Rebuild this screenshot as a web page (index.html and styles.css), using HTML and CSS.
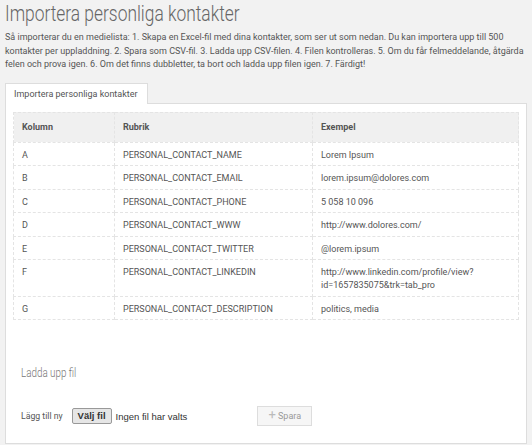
FILE: index.html
```html
<!DOCTYPE html>
<html lang="sv">
<head>
    <meta charset="UTF-8">
    <title>Importera personliga kontakter</title>
    <link rel="stylesheet" href="styles.css">
</head>
<body>

<h1 class="page-title"><span class="narrow">Importera personliga kontakter</span></h1>
<p class="intro">Så importerar du en medielista: 1. Skapa en Excel-fil med dina kontakter, som ser ut som nedan. Du kan importera upp till 500 kontakter per uppladdning. 2. Spara som CSV-fil. 3. Ladda upp CSV-filen. 4. Filen kontrolleras. 5. Om du får felmeddelande, åtgärda felen och prova igen. 6. Om det finns dubbletter, ta bort och ladda upp filen igen. 7. Färdigt!</p>

<div class="tabs">
    <div class="tab active">Importera personliga kontakter</div>
</div>

<div class="panel">
    <table class="columns">
        <thead>
            <tr><th class="col-a">Kolumn</th><th class="col-b">Rubrik</th><th>Exempel</th></tr>
        </thead>
        <tbody>
            <tr><td>A</td><td>PERSONAL_CONTACT_NAME</td><td>Lorem Ipsum</td></tr>
            <tr><td>B</td><td>PERSONAL_CONTACT_EMAIL</td><td>lorem.ipsum@dolores.com</td></tr>
            <tr><td>C</td><td>PERSONAL_CONTACT_PHONE</td><td>5 058 10 096</td></tr>
            <tr><td>D</td><td>PERSONAL_CONTACT_WWW</td><td>http://www.dolores.com/</td></tr>
            <tr><td>E</td><td>PERSONAL_CONTACT_TWITTER</td><td>@lorem.ipsum</td></tr>
            <tr><td>F</td><td>PERSONAL_CONTACT_LINKEDIN</td><td>http://www.linkedin.com/profile/view?<br>id=1657835075&amp;trk=tab_pro</td></tr>
            <tr><td>G</td><td>PERSONAL_CONTACT_DESCRIPTION</td><td>politics, media</td></tr>
        </tbody>
    </table>

    <h3 class="upload-title"><span class="narrow">Ladda upp fil</span></h3>

    <div class="upload-row">
        <span class="upload-label">Lägg till ny</span>
        <span class="file-btn">Välj fil</span>
        <span class="file-name">Ingen fil har valts</span>
        <span class="save-btn"><span class="plus">+</span> Spara</span>
    </div>
</div>

</body>
</html>
```

FILE: styles.css
```css
body {
    margin: 0;
    padding: 0 5px 7px;
    background-color: #f2f2f2;
    font-family: 'Roboto', sans-serif;
    color: #555;
}

.narrow {
    display: inline-block;
    transform-origin: left center;
    white-space: nowrap;
}

.page-title {
    margin: 0;
    padding-top: 1px;
    font-size: 22px;
    font-weight: 300;
    color: #666;
    line-height: 26px;
}

.page-title .narrow {
    transform: scaleX(0.79);
}

.intro {
    margin: 4px 0 0;
    font-size: 9px;
    line-height: 13.5px;
    color: #555;
}

.tabs {
    display: flex;
    margin-top: 11px;
}

.tab {
    background-color: #fff;
    border: 1px solid #ddd;
    border-bottom: none;
    padding: 0 9px 0 8px;
    height: 20px;
    line-height: 21px;
    font-size: 9px;
    color: #555;
    margin-bottom: -1px;
    position: relative;
}

.panel {
    background-color: #fff;
    border: 1px solid #ddd;
    padding: 8px 7px 17px;
}

.columns {
    width: 100%;
    border-collapse: collapse;
    font-size: 9px;
}

.columns th,
.columns td {
    border: 1px dashed #e4e4e4;
    text-align: left;
    vertical-align: top;
    padding: 6px 8px 3.5px;
    line-height: 13px;
}

.columns th {
    background-color: #f0f0f0;
    font-weight: bold;
    height: 29px;
    padding: 0 8px;
    vertical-align: middle;
}

.col-a {
    width: 84px;
}

.col-b {
    width: 181px;
}

.upload-title {
    margin: 46px 0 0 8px;
    font-size: 12px;
    line-height: 14px;
    font-weight: 300;
    color: #777;
}

.upload-title .narrow {
    transform: scaleX(0.82);
}

.upload-row {
    display: flex;
    align-items: center;
    margin: 26px 0 0 8px;
    font-size: 8.7px;
}

.upload-label {
    color: #555;
    margin-right: 9px;
}

.file-btn {
    font-family: 'Liberation Sans', sans-serif;
    font-size: 9.5px;
    font-weight: bold;
    color: #333;
    background-color: #e6e6e6;
    border: 1px solid #999;
    border-radius: 2px;
    padding: 1px 5px;
    line-height: 12px;
}

.file-name {
    font-family: 'Liberation Sans', sans-serif;
    font-size: 9.5px;
    color: #333;
    margin-left: 4px;
}

.save-btn {
    margin-left: 70px;
    border: 1px solid #ddd;
    background-color: #f6f6f6;
    color: #999;
    padding: 3px 10px;
    font-size: 9px;
    line-height: 11px;
}

.plus {
    font-size: 13px;
    line-height: 10px;
    color: #bbb;
}
```
